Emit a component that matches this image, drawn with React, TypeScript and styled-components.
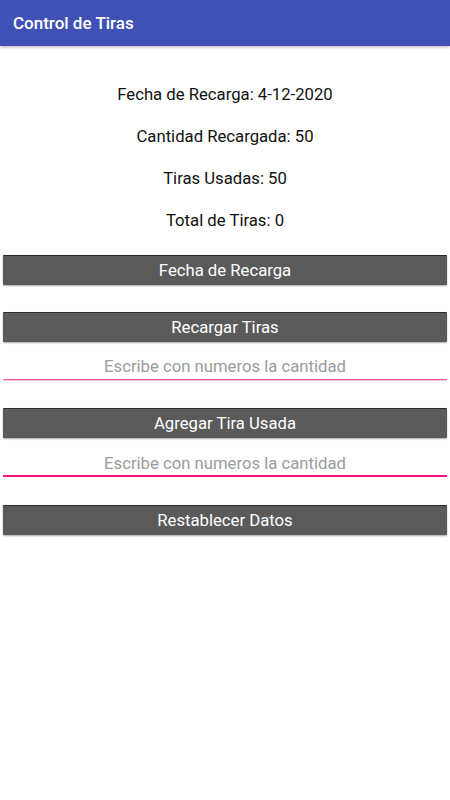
import styled, { createGlobalStyle } from "styled-components";

const GlobalStyle = createGlobalStyle`
  body {
    margin: 0;
    background: #fff;
    font-family: Roboto, "Liberation Sans", sans-serif;
  }
  * {
    box-sizing: border-box;
  }
`;

const Screen = styled.div`
  width: 450px;
  height: 800px;
  display: flex;
  flex-direction: column;
  background: #fff;
`;

const AppBar = styled.header`
  height: 46px;
  display: flex;
  align-items: center;
  padding: 0 13px;
  background: #3f51b5;
  box-shadow: 0 1px 3px rgba(0, 0, 0, 0.3);
  color: #fff;
  font-size: 17px;
  font-weight: 500;
`;

const Info = styled.div`
  display: flex;
  flex-direction: column;
  align-items: center;
  padding-top: 28px;
`;

const InfoLine = styled.p`
  margin: 0;
  line-height: 42px;
  font-size: 16.7px;
  color: #111;
`;

const Actions = styled.div`
  display: flex;
  flex-direction: column;
  padding: 13px 3px 0;
`;

const ActionButton = styled.button<{ $gap?: number }>`
  height: 30px;
  margin-top: ${(p) => p.$gap ?? 0}px;
  border: none;
  border-top: 1px solid #2a2a2a;
  border-radius: 1px;
  background: #5a5a5b;
  box-shadow: 0 1px 2px rgba(0, 0, 0, 0.35);
  color: #fff;
  font-family: inherit;
  font-size: 16.7px;
  padding: 0;
`;

const NumberInput = styled.input<{ $focused?: boolean }>`
  height: ${(p) => (p.$focused ? 36 : 35)}px;
  margin-top: 3px;
  border: none;
  border-bottom: ${(p) => (p.$focused ? "2px solid #ff1080" : "1px solid #ff5c98")};
  box-shadow: ${(p) => (p.$focused ? "none" : "0 1px 0 rgba(255, 128, 170, 0.45)")};
  background: transparent;
  text-align: center;
  font-family: inherit;
  font-size: 16.7px;
  color: #333;
  outline: none;
  padding: ${(p) => (p.$focused ? 10 : 8)}px 0 0;
  &::placeholder {
    color: #9b9b9b;
  }
`;

export default function App() {
  return (
    <Screen>
      <GlobalStyle />
      <AppBar>Control de Tiras</AppBar>
      <Info>
        <InfoLine>Fecha de Recarga: 4-12-2020</InfoLine>
        <InfoLine>Cantidad Recargada: 50</InfoLine>
        <InfoLine>Tiras Usadas: 50</InfoLine>
        <InfoLine>Total de Tiras: 0</InfoLine>
      </Info>
      <Actions>
        <ActionButton>Fecha de Recarga</ActionButton>
        <ActionButton $gap={27}>Recargar Tiras</ActionButton>
        <NumberInput placeholder="Escribe con numeros la cantidad" />
        <ActionButton $gap={28}>Agregar Tira Usada</ActionButton>
        <NumberInput $focused placeholder="Escribe con numeros la cantidad" />
        <ActionButton $gap={28}>Restablecer Datos</ActionButton>
      </Actions>
    </Screen>
  );
}
